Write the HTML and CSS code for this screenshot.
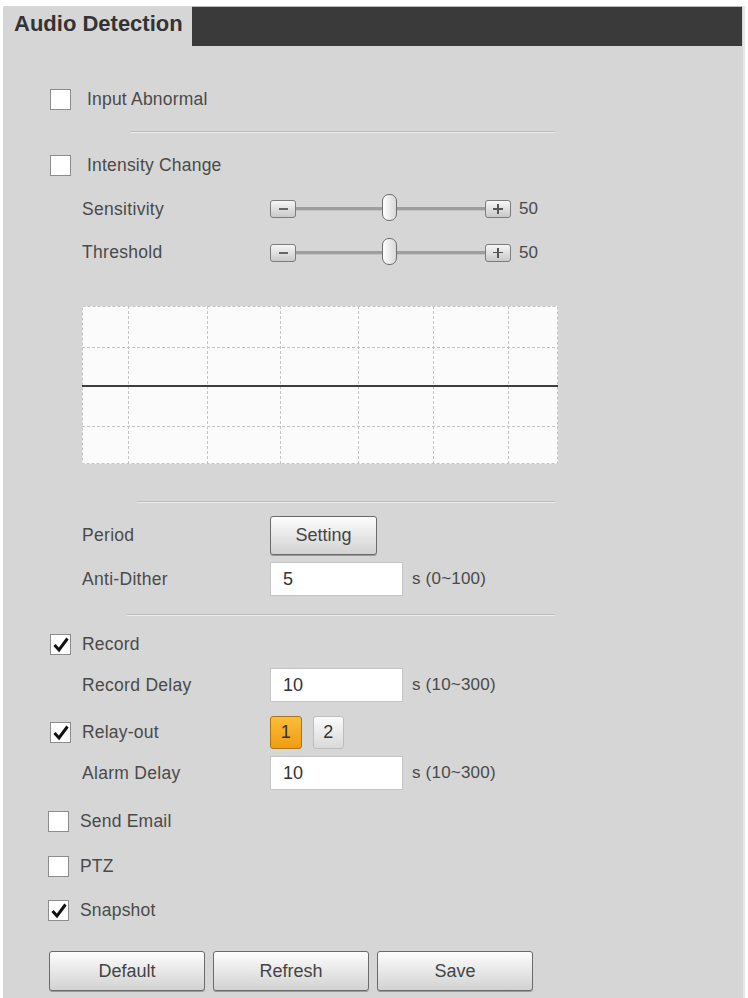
FILE: index.html
```html
<!DOCTYPE html>
<html>
<head>
<meta charset="utf-8">
<link rel="stylesheet" href="styles.css">
</head>
<body>
<div class="panel">
  <div class="header">
    <div class="tab">Audio Detection</div>
    <div class="bar"></div>
  </div>
  <div class="content">
    <div class="row h40 mt33">
      <span class="cb"></span><span class="cb-label wide">Input Abnormal</span>
    </div>
    <div class="sep mt12 sep-a"></div>
    <div class="row h44 mt10">
      <span class="cb"></span><span class="cb-label wide">Intensity Change</span>
    </div>
    <div class="row h44 sub">
      <span class="label">Sensitivity</span>
      <div class="slider">
        <span class="sbtn"><span class="minus"></span></span>
        <span class="track"><span class="thumb"></span></span>
        <span class="sbtn"><span class="plus"></span></span>
        <span class="sval">50</span>
      </div>
    </div>
    <div class="row h43 sub">
      <span class="label">Threshold</span>
      <div class="slider">
        <span class="sbtn"><span class="minus"></span></span>
        <span class="track"><span class="thumb"></span></span>
        <span class="sbtn"><span class="plus"></span></span>
        <span class="sval">50</span>
      </div>
    </div>
    <div class="graph">
      <svg width="476" height="158" viewBox="0 0 476 158">
        <rect x="0" y="0" width="476" height="158" fill="#fbfbfb"/>
        <g stroke="#c4c4c4" stroke-width="1" stroke-dasharray="3 2" fill="none">
          <rect x="0.5" y="0.5" width="475" height="157"/>
          <line x1="46.5" y1="0" x2="46.5" y2="158"/>
          <line x1="125.5" y1="0" x2="125.5" y2="158"/>
          <line x1="198.5" y1="0" x2="198.5" y2="158"/>
          <line x1="276.5" y1="0" x2="276.5" y2="158"/>
          <line x1="351.5" y1="0" x2="351.5" y2="158"/>
          <line x1="426.5" y1="0" x2="426.5" y2="158"/>
          <line x1="0" y1="41.5" x2="476" y2="41.5"/>
          <line x1="0" y1="120.5" x2="476" y2="120.5"/>
        </g>
        <line x1="0" y1="80" x2="476" y2="80" stroke="#3e3e3e" stroke-width="2"/>
      </svg>
    </div>
    <div class="sep sep-b"></div>
    <div class="row h40 mt12 sub">
      <span class="label">Period</span>
      <button class="btn setting">Setting</button>
    </div>
    <div class="row h34 mt7 sub">
      <span class="label">Anti-Dither</span>
      <span class="input">5</span><span class="unit">s (0~100)</span>
    </div>
    <div class="sep sep-c"></div>
    <div class="row h40 mt8">
      <span class="cb"><svg class="tick" width="20" height="20" viewBox="0 0 20 20"><path d="M3.5 10 L8 15 L16.5 3.5" fill="none" stroke="#111" stroke-width="3"/></svg></span><span class="cb-label">Record</span>
    </div>
    <div class="row h34 mt4 sub">
      <span class="label">Record Delay</span>
      <span class="input">10</span><span class="unit">s (10~300)</span>
    </div>
    <div class="row h40 mt10">
      <span class="cb"><svg class="tick" width="20" height="20" viewBox="0 0 20 20"><path d="M3.5 10 L8 15 L16.5 3.5" fill="none" stroke="#111" stroke-width="3"/></svg></span><span class="cb-label">Relay-out</span>
      <div class="relays">
        <span class="relay on">1</span><span class="relay">2</span>
      </div>
    </div>
    <div class="row h34 mt4 sub">
      <span class="label">Alarm Delay</span>
      <span class="input">10</span><span class="unit">s (10~300)</span>
    </div>
    <div class="row h40 mt11 low">
      <span class="cb"></span><span class="cb-label">Send Email</span>
    </div>
    <div class="row h40 mt5 low">
      <span class="cb"></span><span class="cb-label">PTZ</span>
    </div>
    <div class="row h40 mt4 low">
      <span class="cb"><svg class="tick" width="20" height="20" viewBox="0 0 20 20"><path d="M3.5 10 L8 15 L16.5 3.5" fill="none" stroke="#111" stroke-width="3"/></svg></span><span class="cb-label">Snapshot</span>
    </div>
    <div class="actions">
      <button class="btn big">Default</button>
      <button class="btn big">Refresh</button>
      <button class="btn big">Save</button>
    </div>
  </div>
</div>
</body>
</html>
```
FILE: styles.css
```css
html, body {
  margin: 0;
  padding: 0;
  background: #ffffff;
}
body {
  font-family: "Liberation Sans", Arial, sans-serif;
  color: #4a4a4a;
  padding-top: 6px;
  padding-left: 3px;
  overflow: hidden;
}
.panel {
  width: 740px;
  height: 992px;
  background: #d6d6d6;
  border-right: 2px solid #e6e6e6;
}
.header {
  display: flex;
  height: 40px;
}
.tab {
  width: 178px;
  padding-left: 11px;
  font-size: 22px;
  font-weight: bold;
  color: #333;
  line-height: 36px;
}
.bar {
  flex: 1;
  background: #3a3a3a;
  border-top: 1px solid #b8b8b8;
  margin-right: 1px;
}
.content {
  padding-left: 47px;
  display: flex;
  flex-direction: column;
}
.row {
  display: flex;
  align-items: center;
  font-size: 17.5px;
}
.h34 { height: 34px; }
.h40 { height: 40px; }
.h43 { height: 43px; }
.h44 { height: 44px; }
.mt4 { margin-top: 4px; }
.mt5 { margin-top: 5px; }
.mt7 { margin-top: 7px; }
.mt8 { margin-top: 8px; }
.mt10 { margin-top: 10px; }
.mt11 { margin-top: 11px; }
.mt12 { margin-top: 12px; }
.mt33 { margin-top: 33px; }
.cb {
  width: 21px;
  height: 21px;
  box-sizing: border-box;
  border: 1px solid #8c8c8c;
  background: #fff;
  position: relative;
  flex: none;
}
.tick {
  position: absolute;
  left: 0;
  top: 0;
}
.cb-label {
  margin-left: 11px;
  letter-spacing: 0.2px;
}
.cb-label.wide {
  margin-left: 16px;
}
.low {
  margin-left: -2px;
}
.label {
  margin-left: 32px;
  width: 188px;
  flex: none;
  letter-spacing: 0.3px;
}
.sep {
  height: 0;
  border-top: 1px solid #bcbcbc;
  border-bottom: 1px solid #ececec;
}
.sep-a { margin-left: 80px; width: 425px; }
.sep-b { margin-left: 87px; width: 418px; margin-top: 37px; }
.sep-c { margin-left: 77px; width: 428px; margin-top: 18px; }
.slider {
  display: flex;
  align-items: center;
}
.sbtn {
  width: 26px;
  height: 18px;
  box-sizing: border-box;
  border: 1px solid #7c7c7c;
  border-radius: 3px;
  background: linear-gradient(#f6f6f6, #c9c9c9);
  display: flex;
  align-items: center;
  justify-content: center;
  position: relative;
  flex: none;
}
.minus {
  width: 9px;
  height: 2px;
  background: #666;
}
.plus {
  width: 10px;
  height: 10px;
  position: relative;
}
.plus::before, .plus::after {
  content: "";
  position: absolute;
  background: #555;
}
.plus::before { left: 0; top: 4px; width: 10px; height: 1.5px; }
.plus::after { left: 4.25px; top: 0; width: 1.5px; height: 10px; }
.track {
  width: 189px;
  height: 3px;
  background: #9e9e9e;
  border-bottom: 1px solid #c2c2c2;
  position: relative;
}
.thumb {
  position: absolute;
  left: 86px;
  top: -13px;
  width: 15px;
  height: 27px;
  box-sizing: border-box;
  border: 1px solid #6e6e6e;
  border-radius: 7px;
  background: linear-gradient(90deg, #ffffff, #d8d8d8);
}
.sval {
  margin-left: 8px;
  font-size: 17px;
}
.graph {
  margin-top: 32px;
  margin-left: 32px;
  height: 158px;
  display: flex;
}
.graph svg { display: block; }
.btn {
  font-family: "Liberation Sans", Arial, sans-serif;
  font-size: 18px;
  color: #444;
  background: linear-gradient(#fdfdfd, #d2d2d2);
  border: 1px solid #6a6a6a;
  border-radius: 3px;
  padding: 0;
  box-shadow: 0 1px 0 #9a9a9a;
}
.setting {
  width: 107px;
  height: 39px;
}
.input {
  width: 133px;
  height: 34px;
  box-sizing: border-box;
  background: #fff;
  border: 1px solid #c6c6c6;
  padding-left: 12px;
  display: flex;
  align-items: center;
  font-size: 18px;
  color: #333;
  flex: none;
}
.unit {
  margin-left: 9px;
  font-size: 17px;
  letter-spacing: 0.2px;
}
.relays {
  display: flex;
  gap: 11px;
  margin-left: 111px;
}
.relay {
  width: 31px;
  height: 33px;
  box-sizing: border-box;
  border: 1px solid #bdbdbd;
  border-radius: 3px;
  background: linear-gradient(#fbfbfb, #d9d9d9);
  display: flex;
  align-items: center;
  justify-content: center;
  font-size: 18px;
  color: #333;
}
.relay.on {
  width: 32px;
  background: linear-gradient(#fbbd3a, #f19c12);
  border-color: #a67419;
}
.actions {
  display: flex;
  gap: 8px;
  margin-top: 21px;
  margin-left: -1px;
}
.big {
  width: 156px;
  height: 40px;
}
```
